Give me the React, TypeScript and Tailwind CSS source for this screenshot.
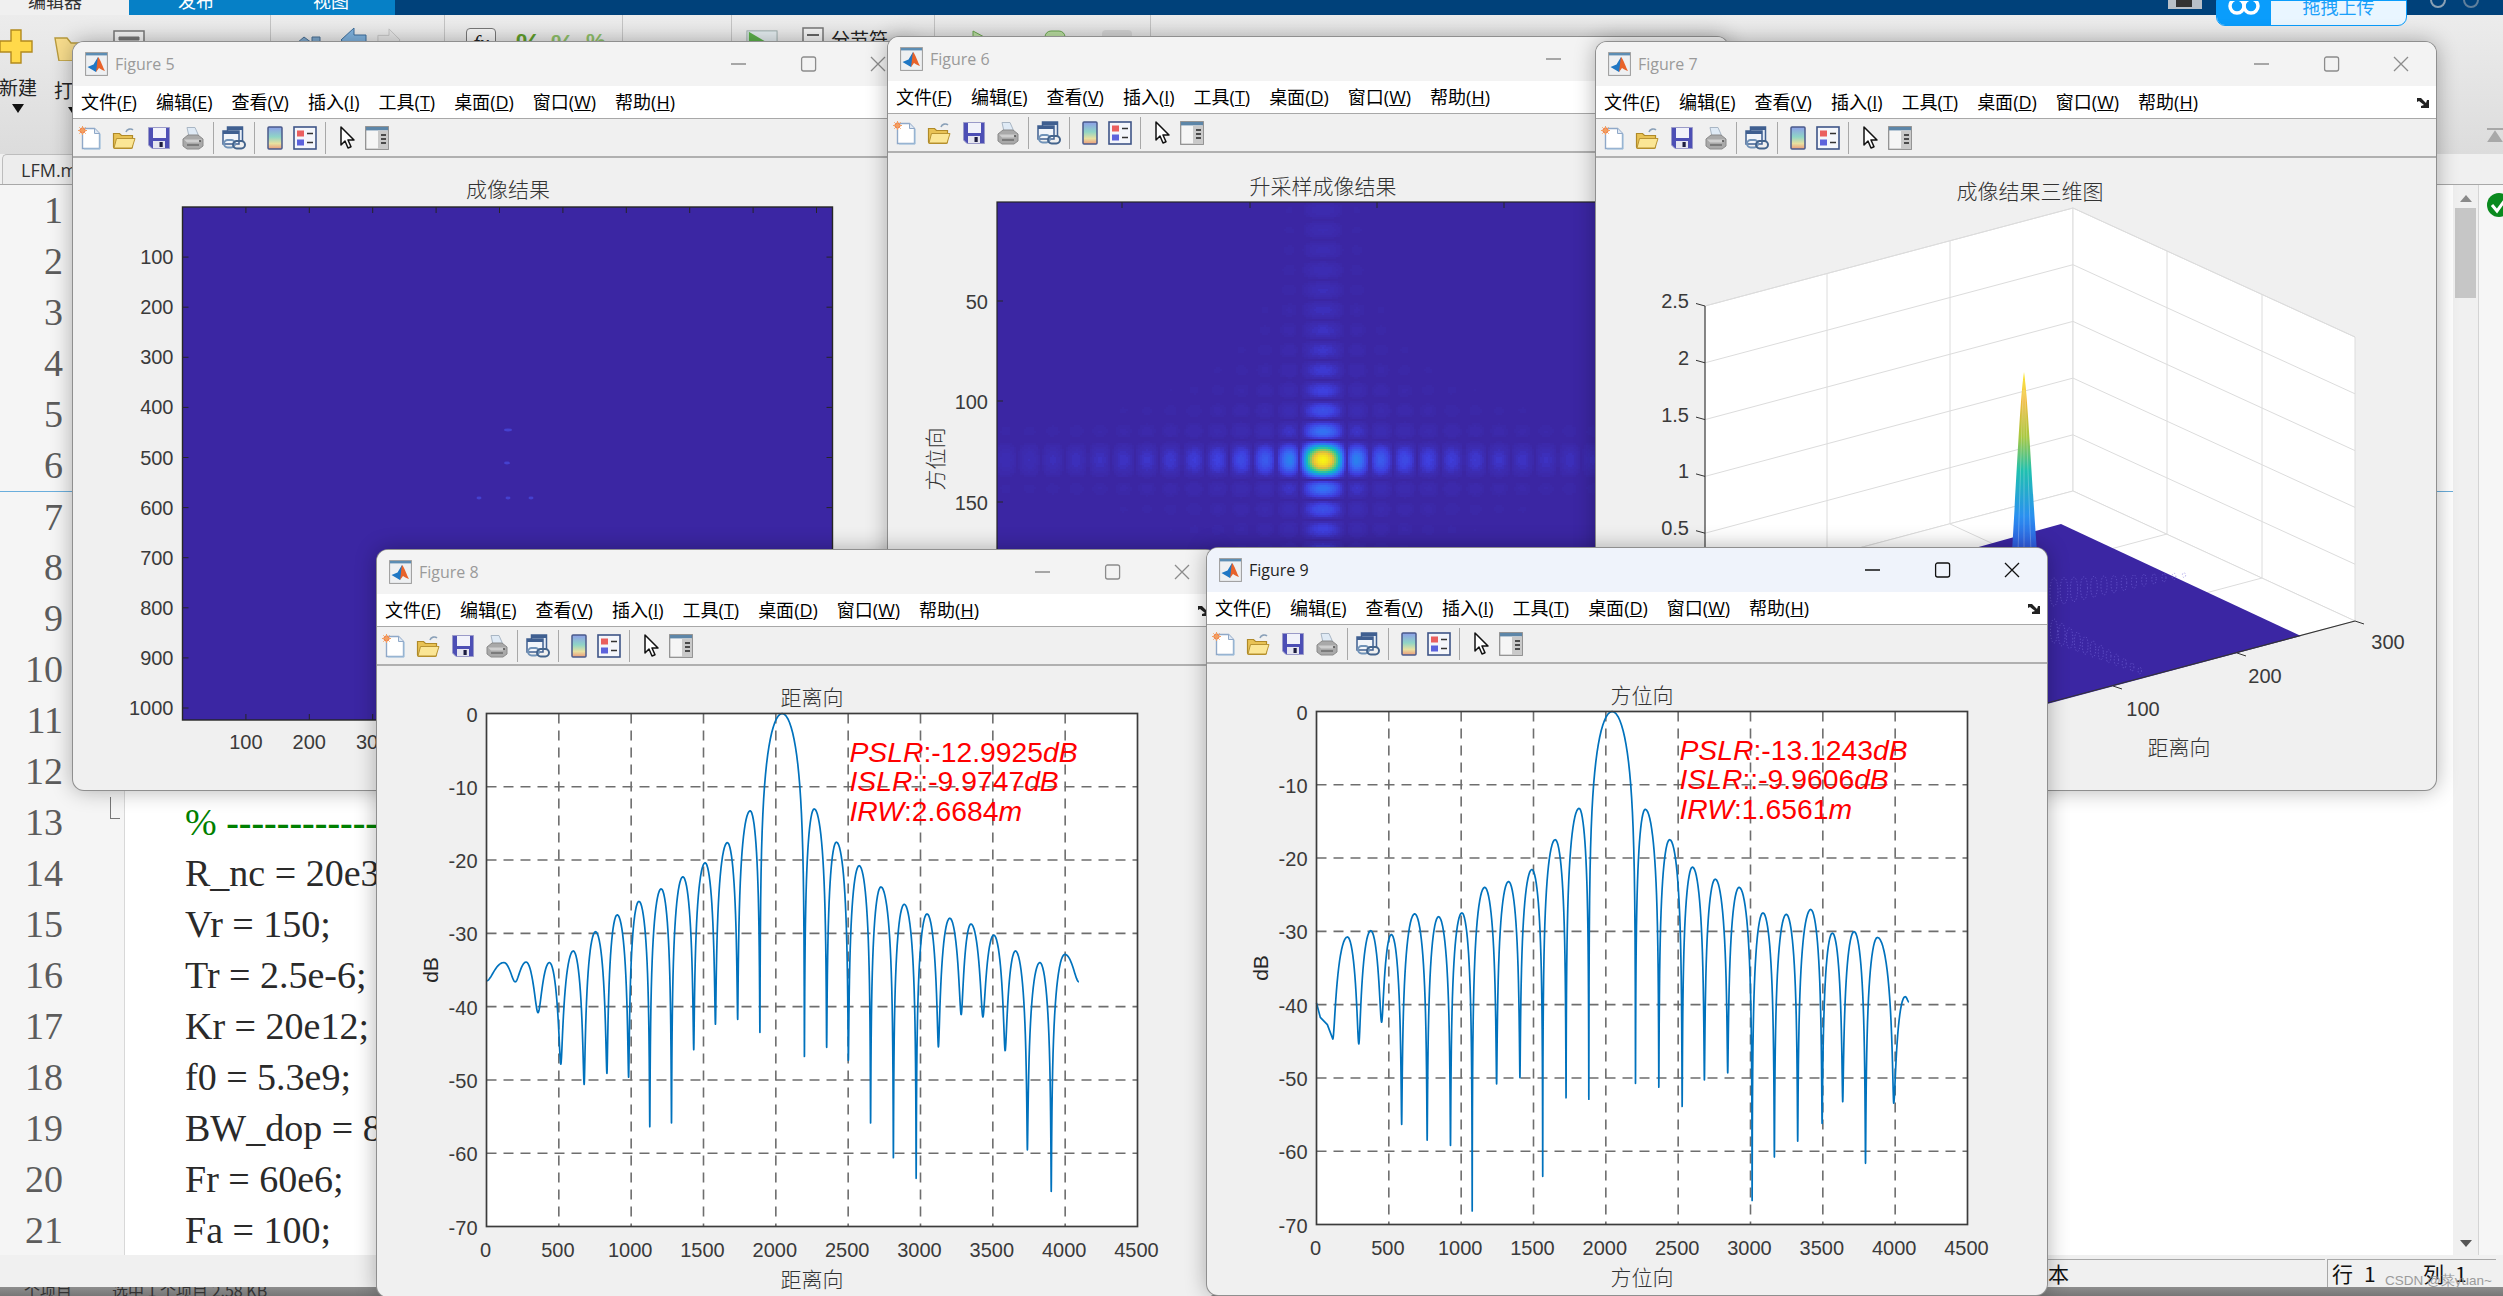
import React from "react";

const SANS = "font-['Liberation_Sans',sans-serif]";

/* ---------- toolbar & window icons ---------- */
const NewIco = () => (
  <svg width="24" height="24" viewBox="0 0 24 24" className="shrink-0">
    <path d="M4.5 2.5h12l5 5v15h-17z" fill="#fff" stroke="#8fa8c8" strokeWidth="1.4" />
    <path d="M16.5 2.5v5h5" fill="#dfe8f3" stroke="#8fa8c8" />
    <path d="M6 23h16V8" fill="none" stroke="#9fc0dc" strokeWidth="1" />
    <circle cx="4.5" cy="4.5" r="3" fill="#f08050" />
    <path d="M4.5 0v9M0 4.5h9M1.3 1.3l6.4 6.4M7.7 1.3L1.3 7.7" stroke="#f3a060" strokeWidth="1" />
  </svg>
);
const OpenIco = () => (
  <svg width="24" height="24" viewBox="0 0 24 24" className="shrink-0">
    <path d="M14 6c1-3 5-4 7-2" fill="none" stroke="#8aa0b8" strokeWidth="1.6" />
    <path d="M1.5 21V7.5h6l2 2h11V21a1.5 1.5 0 0 1-1.5 1.5H3A1.5 1.5 0 0 1 1.5 21z" fill="#e8c254" stroke="#b08a28" strokeWidth="1.2" />
    <path d="M2 22l2.5-9.5H23l-3 9.5z" fill="#fbe695" stroke="#b99432" strokeWidth="1" />
  </svg>
);
const SaveIco = () => (
  <svg width="24" height="24" viewBox="0 0 24 24" className="shrink-0">
    <path d="M1.5 1.5h21v21H5l-3.5-3.5z" fill="#4d4fb5" stroke="#9a9ac8" strokeWidth="1" />
    <rect x="6" y="2" width="13" height="10" fill="#f1f2fa" />
    <rect x="6" y="15" width="12" height="7" fill="#e6e6f0" />
    <rect x="12.5" y="16" width="3.2" height="5" fill="#1d1d40" />
  </svg>
);
const PrintIco = () => (
  <svg width="24" height="24" viewBox="0 0 24 24" className="shrink-0">
    <path d="M6 1.5h8l4 9H8z" fill="#dfeaf5" stroke="#a9b6c4" />
    <path d="M2 13l5-4h10l5 4v7l-4 3H6l-4-3z" fill="#a9a9a9" stroke="#8a8a8a" />
    <path d="M3 13.5h18l-3 3H6z" fill="#cfcfcf" />
    <path d="M6 19h12" stroke="#6d6d6d" strokeWidth="1.4" />
    <circle cx="19" cy="15" r="1.1" fill="#555" />
  </svg>
);
const LinkIco = () => (
  <svg width="24" height="24" viewBox="0 0 24 24" className="shrink-0">
    <rect x="5.5" y="1" width="15" height="14" fill="#e6edf6" stroke="#3f5f90" strokeWidth="1.5" />
    <rect x="5.5" y="1" width="15" height="3" fill="#3f5f90" />
    <rect x="1" y="5" width="16" height="13" fill="#f2f5fa" stroke="#3f5f90" strokeWidth="1.5" />
    <rect x="1" y="5" width="16" height="3" fill="#3f5f90" />
    <rect x="2" y="14" width="11" height="7.5" rx="3.7" fill="none" stroke="#7193b8" strokeWidth="2" />
    <rect x="11" y="15" width="12" height="7.5" rx="3.7" fill="none" stroke="#44648c" strokeWidth="2" />
  </svg>
);
const BarIco = () => (
  <svg width="24" height="24" viewBox="0 0 24 24" className="shrink-0">
    <defs>
      <linearGradient id="cb" x1="0" y1="0" x2="0" y2="1">
        <stop offset="0" stopColor="#8d9ee8" />
        <stop offset="0.45" stopColor="#8fd5c6" />
        <stop offset="0.75" stopColor="#e8e0a0" />
        <stop offset="1" stopColor="#eb9a7a" />
      </linearGradient>
    </defs>
    <rect x="5" y="1" width="14" height="22" rx="1" fill="url(#cb)" stroke="#4a5a8a" strokeWidth="1.5" />
  </svg>
);
const LegIco = () => (
  <svg width="24" height="24" viewBox="0 0 24 24" className="shrink-0">
    <rect x="1" y="1" width="22" height="22" fill="#f4f6fb" stroke="#3f5588" strokeWidth="1.6" />
    <rect x="4" y="4.5" width="7" height="6" fill="#ea5f5f" />
    <rect x="4" y="13.5" width="7" height="6" fill="#5c62dc" />
    <path d="M14 7.5h6M14 16.5h6" stroke="#333" strokeWidth="1.6" />
  </svg>
);
const CurIco = () => (
  <svg width="24" height="24" viewBox="0 0 24 24" className="shrink-0">
    <path d="M6 1v18l4-4 3 7 3-1.3-3-6.7h6z" fill="#fff" stroke="#111" strokeWidth="1.5" strokeLinejoin="round" />
  </svg>
);
const PanIco = () => (
  <svg width="24" height="24" viewBox="0 0 24 24" className="shrink-0">
    <rect x="0.7" y="0.7" width="22.6" height="22.6" fill="#f5f5f5" stroke="#8a8a8a" strokeWidth="1.2" />
    <rect x="1" y="1" width="22" height="3.4" fill="#5d86a8" />
    <rect x="13" y="4.5" width="10" height="18.5" fill="#c9c9c9" />
    <path d="M16 9h5M16 13h5M16 17h5" stroke="#222" strokeWidth="1.7" />
  </svg>
);
const Logo = () => (
  <svg width="23" height="24" viewBox="0 0 23 24" className="shrink-0">
    <rect x="0.6" y="0.6" width="21.8" height="22.8" fill="#eef0f2" stroke="#9a9a9a" />
    <rect x="1" y="1" width="21" height="2.4" fill="#5c8db3" />
    <path d="M2.5 15l6-2.5L13 5l2.5 6-4.5 9z" fill="#1f77c4" />
    <path d="M13 5c3 3 4.500 10 7 14-3-1-4.500-2-6-3-1 1-2 3-3 4 1-5 1-11 2-15z" fill="#e8622a" />
  </svg>
);
const Dock = () => (
  <svg width="14" height="13" viewBox="0 0 14 13" className="shrink-0">
    <path d="M1 2h4l5 5 1-3h2v8H5v-2l3-1-5-4-2 1z" fill="#222" />
  </svg>
);

const Toolbar = () => (
  <div className="flex h-[39px] shrink-0 items-center border-b-2 border-[#b0b0b0] bg-[#f0f0f0] pl-[5px]">
    <NewIco />
    <div className="ml-[10px]"><OpenIco /></div>
    <div className="ml-[11px]"><SaveIco /></div>
    <div className="ml-[10px]"><PrintIco /></div>
    <div className="ml-[8px] h-[32px] w-px bg-[#a8a8a8]" />
    <div className="ml-[8px]"><LinkIco /></div>
    <div className="ml-[8px] h-[32px] w-px bg-[#a8a8a8]" />
    <div className="ml-[8px]"><BarIco /></div>
    <div className="ml-[6px]"><LegIco /></div>
    <div className="ml-[8px] h-[32px] w-px bg-[#a8a8a8]" />
    <div className="ml-[9px]"><CurIco /></div>
    <div className="ml-[6px]"><PanIco /></div>
  </div>
);

const menu: [string, string][] = [
  ["文件", "F"], ["编辑", "E"], ["查看", "V"], ["插入", "I"],
  ["工具", "T"], ["桌面", "D"], ["窗口", "W"], ["帮助", "H"],
];

const Win = ({ cls, title, active, children }: { cls: string; title: string; active?: boolean; children: React.ReactNode }) => (
  <div className={`absolute flex flex-col overflow-hidden rounded-[11px] bg-[#f0f0f0] shadow-[0_0_0_1px_#8f8f8f,0_0_22px_rgba(0,0,0,0.32)] ${cls}`}>
    <div className={`flex h-[44px] shrink-0 items-center pl-[12px] pr-[27px] ${active ? "bg-[#eff3fb]" : "bg-[#f3f3f3]"}`}>
      <Logo />
      <span className={`ml-[7px] flex-1 font-['Open_Sans',sans-serif] text-[16px] ${active ? "text-[#1f1f1f]" : "text-[#9a9a9a]"}`}>{title}</span>
      <svg width="155" height="16" viewBox="0 0 155 16" stroke={active ? "#111" : "#8c8c8c"} strokeWidth="1.3" fill="none">
        <path d="M0 8h15" />
        <rect x="70.600" y="1" width="14" height="14" rx="2" />
        <path d="M140 1l14 14M154 1l-14 14" />
      </svg>
    </div>
    <div className="flex h-[33px] shrink-0 items-center justify-between border-b border-[#a8a8a8] bg-white pl-[8px] pr-[6px] font-['Open_Sans','Noto_Sans_CJK_SC',sans-serif] text-[18px] text-black">
      <div className="flex gap-[19px]">
        {menu.map(([a, b]) => (
          <span key={a} className="whitespace-nowrap">{a}(<u>{b}</u>)</span>
        ))}
      </div>
      <Dock />
    </div>
    <Toolbar />
    <div className="flex-1 overflow-hidden">{children}</div>
  </div>
);

/* ---------- charts ---------- */
const TXT = "#3a3a3a";
const cjk = "font-['Noto_Sans_CJK_SC',sans-serif] font-light";

function lobes(pts: number[][], top: number, axL: number, axT: number, prefix: number[][] = []) {
  const X = (x: number) => axL + ((x - 215) / 1200) * 651;
  const Y = (y: number) => axT + ((y - top) / 1065) * 513;
  const out: string[] = prefix.map((p) => `${X(p[0]).toFixed(2)},${Y(p[1]).toFixed(2)}`);
  const half = (n: number[], p: number[], rev: boolean) => {
    const d = (n[1] - p[1]) / 15.2;
    const e2 = Math.pow(10, -d / 10);
    const den = Math.log(1 + e2) - Math.log(e2);
    const N = 22;
    for (let k = 0; k <= N; k++) {
      const i = rev ? N - k : k;
      const u = (i / N) * (i / N);
      const s = Math.sin((Math.PI / 2) * u);
      const g = (Math.log(1 + e2) - Math.log(s * s + e2)) / den;
      out.push(`${X(n[0] + (p[0] - n[0]) * u).toFixed(2)},${Y(p[1] + (n[1] - p[1]) * g).toFixed(2)}`);
    }
  };
  for (let i = 0; i + 2 < pts.length; i += 2) {
    half(pts[i], pts[i + 1], false);
    half(pts[i + 2], pts[i + 1], true);
  }
  return "M" + out.join("L");
}

const f8pts = [
  [215,915],[247,877],[268,917],[288,876],[310,981],[331,877],[352,1088],[375,853],[395,1130],[416,813],[437,1107],[456,778],[477,1115],[496,750],[516,1218],[537,724],[556,1210],[577,699],[597,1058],[618,670],[637,1005],[659,628],[678,995],[701,562],[719,1022],[760,360],[801,1072],[819,558],[842,1053],[860,627],[882,1080],[902,676],[923,1210],[942,720],[965,1282],[985,756],[1007,1325],[1027,776],[1048,1052],[1069,785],[1090,985],[1108,797],[1130,990],[1150,820],[1171,1060],[1190,853],[1212,1266],[1235,877],[1256,1352],[1281,860],[1307,917],
];
const f9pts = [
  [245,1035],[272,823],[293,1045],[315,810],[335,1000],[353,818],[372,1212],[396,775],[419,1245],[440,781],[462,1256],[483,773],[502,1392],[525,720],[547,1128],[569,708],[590,1115],[612,683],[632,1320],[655,621],[675,1157],[699,556],[717,1160],[760,355],[803,1127],[821,558],[846,1135],[866,621],[889,1175],[908,678],[930,1120],[950,703],[973,1105],[994,720],[1018,1370],[1038,773],[1059,1280],[1081,776],[1102,1247],[1126,766],[1147,1210],[1166,815],[1185,1165],[1206,812],[1227,1293],[1249,824],[1279,1168],[1300,947],[1307,958],
];

const LinePlot = ({ axL, axT, vx, vy, vw, vh, title, d, lines }: { axL: number; axT: number; vx: number; vy: number; vw: number; vh: number; title: string; d: string; lines: React.ReactNode[] }) => {
  const W = 651, H = 513;
  const xs = Array.from({ length: 10 }, (_, i) => i);
  const ys = Array.from({ length: 8 }, (_, i) => i);
  return (
    <svg width={vw} height={vh} viewBox={`${vx} ${vy} ${vw} ${vh}`} className={`block ${SANS}`}>
      <rect x={axL} y={axT} width={W} height={H} fill="#fff" />
      {xs.slice(1, 9).map((i) => (
        <line key={i} x1={axL + (i * W) / 9} x2={axL + (i * W) / 9} y1={axT} y2={axT + H} stroke="#6e6e6e" strokeWidth="1.6" strokeDasharray="10 7" />
      ))}
      {ys.slice(1, 7).map((i) => (
        <line key={i} y1={axT + (i * H) / 7} y2={axT + (i * H) / 7} x1={axL} x2={axL + W} stroke="#6e6e6e" strokeWidth="1.6" strokeDasharray="10 7" />
      ))}
      <path d={d} fill="none" stroke="#0072bd" strokeWidth="1.7" strokeLinejoin="round" />
      <rect x={axL} y={axT} width={W} height={H} fill="none" stroke="#3c3c3c" strokeWidth="1.700" />
      {xs.map((i) => (
        <text key={i} x={axL + (i * W) / 9 - 1} y={axT + H + 30} textAnchor="middle" fontSize="20" fill={TXT}>{i * 500}</text>
      ))}
      {ys.map((i) => (
        <text key={i} x={axL - 9} y={axT + (i * H) / 7 + 8} textAnchor="end" fontSize="20" fill={TXT}>{i === 0 ? "0" : `-${i * 10}`}</text>
      ))}
      <text x={axL + W / 2} y={axT - 9} textAnchor="middle" fontSize="21" fill="#333" className={cjk}>{title}</text>
      <text x={axL + W / 2} y={axT + H + 60} textAnchor="middle" fontSize="21" fill="#333" className={cjk}>{title}</text>
      <text transform={`rotate(-90 ${axL - 49} ${axT + H / 2})`} x={axL - 49} y={axT + H / 2} textAnchor="middle" fontSize="21" fill="#262626">dB</text>
      {lines.map((l, i) => (
        <text key={i} x={axL + 363} y={axT + 48 + i * 29.500} fontSize="28.300" fill="#ff0000">{l}</text>
      ))}
    </svg>
  );
};

const it = (s: string) => <tspan fontStyle="italic">{s}</tspan>;

const Plot5 = () => {
  const L = 182.5, T = 207, W = 650, H = 513;
  const tx = Array.from({ length: 10 }, (_, i) => (i + 1) * 100);
  return (
    <svg width={840} height={632} viewBox="73 158 840 632" className={`block ${SANS}`}>
      <rect x={L} y={T} width={W} height={H} fill="#3b26a3" stroke="#262626" strokeWidth="1.4" />
      {[[508, 430, 4], [507, 463, 3], [479, 498, 2.500], [508, 498, 2.500], [531, 498, 2.500]].map(([x, y, r], i) => (
        <ellipse key={i} cx={x} cy={y} rx={r} ry="1.400" fill="#4541cf" />
      ))}
      {tx.map((v) => {
        const x = L + v * 0.634, y = T + v * 0.501;
        return (
          <g key={v}>
            <path d={`M${x} ${T}v6M${x} ${T + H}v-6M${L} ${y}h6M${L + W} ${y}h-6`} stroke="#262626" strokeWidth="1" />
            <text x={L - 9} y={y + 7} textAnchor="end" fontSize="20" fill={TXT}>{v}</text>
            <text x={x} y={T + H + 29} textAnchor="middle" fontSize="20" fill={TXT}>{v}</text>
          </g>
        );
      })}
      <text x={508} y={197} textAnchor="middle" fontSize="21" fill="#333" className={cjk}>成像结果</text>
    </svg>
  );
};

/* parula-like colour for the upsampled image */
const stops: [number, number[]][] = [
  [0, [59, 38, 163]], [0.05, [60, 44, 178]], [0.12, [62, 62, 222]], [0.24, [56, 104, 244]], [0.36, [30, 150, 232]],
  [0.5, [16, 191, 185]], [0.65, [111, 204, 107]], [0.8, [232, 188, 58]], [1, [248, 243, 21]],
];
const colour = (v: number) => {
  for (let i = 1; i < stops.length; i++) {
    if (v <= stops[i][0]) {
      const [a, ca] = stops[i - 1];
      const [b, cb] = stops[i];
      const t = (v - a) / (b - a);
      return `rgb(${ca.map((c, k) => Math.round(c + (cb[k] - c) * t)).join(",")})`;
    }
  }
  return "rgb(248,243,21)";
};
const sinc = (x: number) => (Math.abs(x) < 1e-6 ? 1 : Math.sin(Math.PI * x) / (Math.PI * x));
const heat = (() => {
  const cx = 1323, cy = 460, c = 2, LV = 80;
  const buckets: string[] = Array.from({ length: LV + 1 }, () => "");
  for (let y = 203; y < 552; y += c) {
    for (let x = 998; x < 1598; x += c) {
      const sx = Math.abs(sinc((x + 1 - cx) / 23.5));
      const sy = Math.abs(sinc((y + 1 - cy) / 20));
      const v = Math.pow(sx, 0.78) * Math.pow(sy, 0.86);
      if (v < 0.012) continue;
      const q = Math.round(v * LV);
      if (q === 0) continue;
      buckets[q] += `M${x} ${y}h${c}v${c}h-${c}z`;
    }
  }
  return buckets.map((d, i) => ({ d, col: colour(i / LV) })).filter((b) => b.d);
})();

const Plot6 = () => (
  <svg width={840} height={637} viewBox="888 153 840 637" className={`block ${SANS}`}>
    <rect x={997} y={202} width={650} height={513} fill="#3b26a3" stroke="#262626" strokeWidth="1.2" />
    {heat.map((b, i) => <path key={i} d={b.d} fill={b.col} />)}
    {[1122, 1250, 1377, 1504].map((x) => <path key={x} d={`M${x} 202v6`} stroke="#262626" />)}
    {[[301, "50"], [401, "100"], [502, "150"]].map(([y, t]) => (
      <g key={t as string}>
        <path d={`M997 ${y}h6`} stroke="#262626" />
        <text x={988} y={(y as number) + 8} textAnchor="end" fontSize="20" fill={TXT}>{t}</text>
      </g>
    ))}
    <text x={1323} y={194} textAnchor="middle" fontSize="21" fill="#333" className={cjk}>升采样成像结果</text>
    <text transform="rotate(-90 943 459)" x={943} y={459} textAnchor="middle" fontSize="21" fill="#333" className={cjk}>方位向</text>
  </svg>
);

const Plot7 = () => (
  <svg width={840} height={632} viewBox="1596 158 840 632" className={`block ${SANS}`}>
    <defs>
      <linearGradient id="spk" x1="0" y1="0" x2="0" y2="1">
        <stop offset="0" stopColor="#f9e71e" />
        <stop offset="0.16" stopColor="#f0b93a" />
        <stop offset="0.36" stopColor="#a8c840" />
        <stop offset="0.55" stopColor="#1fc0b0" />
        <stop offset="0.8" stopColor="#2a90f0" />
        <stop offset="1" stopColor="#3355e0" />
      </linearGradient>
    </defs>
    <polygon points="1705,306 2073,208 2073,491 1705,589" fill="#fff" stroke="#dcdcdc" />
    <polygon points="2073,208 2355,337 2355,621 2073,491" fill="#fff" stroke="#dcdcdc" />
    <polygon points="2073,491 2355,621 1987,719 1705,589" fill="#fff" stroke="#dcdcdc" />
    <g stroke="#dcdcdc" strokeWidth="1">
      {[0, 1, 2, 3, 4].map((k) => (
        <g key={k}>
          <line x1={1705} y1={306 + 56.8 * k} x2={2073} y2={208 + 56.7 * k} />
          <line x1={2073} y1={208 + 56.7 * k} x2={2355} y2={337 + 56.8 * k} />
        </g>
      ))}
      <path d="M1827 273V556L2109 686M1950 241V524L2232 654M2167 251V534L1799 632M2262 294V578L1894 676" fill="none" />
    </g>
    <polygon points="1900,569 2061,524 2301,636 2047,704 1900,650" fill="#3b26a3" />
    <g fill="none" stroke="#7d72e0" strokeWidth="0.7" strokeDasharray="1.200 1.800" strokeOpacity="0.8">
      {Array.from({ length: 14 }, (_, i) => (
        <ellipse key={i} cx={2054 + i * 10} cy={592 - i * 1.3} rx={4 - i * 0.18} ry={14 - i * 0.9} />
      ))}
      {Array.from({ length: 12 }, (_, i) => (
        <ellipse key={i} cx={2054 + i * 7.800} cy={631 + i * 3.6} rx={3.500 - i * 0.16} ry={12 - i * 0.8} />
      ))}
    </g>
    <path d="M2012 552C2017 470 2020 400 2024 372C2028 400 2031 470 2037 552Z" fill="url(#spk)" />
    <path d="M2018 552L2023 390M2024 552V380M2031 552L2025 390" stroke="#ffffff" strokeOpacity="0.25" fill="none" />
    <path d="M1705 306V589M1987 719L2355 621" stroke="#333" strokeWidth="1.1" fill="none" />
    {[0, 1, 2, 3, 4].map((k) => (
      <g key={k}>
        <path d={`M1696 ${303.5 + 56.8 * k}L1705 ${306 + 56.8 * k}`} stroke="#333" />
        <text x={1689} y={308 + 56.8 * k} textAnchor="end" fontSize="20" fill={TXT}>{["2.5", "2", "1.5", "1", "0.5"][k]}</text>
      </g>
    ))}
    {[[2355, 621], [2237, 653], [2113, 686]].map(([x, y]) => (
      <path key={x} d={`M${x} ${y}l9 3`} stroke="#333" />
    ))}
    <text x={2388} y={649} textAnchor="middle" fontSize="20" fill={TXT}>300</text>
    <text x={2265} y={683} textAnchor="middle" fontSize="20" fill={TXT}>200</text>
    <text x={2143} y={716} textAnchor="middle" fontSize="20" fill={TXT}>100</text>
    <text x={2179} y={755} textAnchor="middle" fontSize="21" fill="#333" className={cjk}>距离向</text>
    <text x={2030} y={199} textAnchor="middle" fontSize="21" fill="#333" className={cjk}>成像结果三维图</text>
  </svg>
);

/* ---------- editor behind the figures ---------- */
const code: Record<number, React.ReactNode> = {
  13: <span className="font-bold text-[#008000]"><span className="font-normal">%</span> ------------------------------------</span>,
  14: "R_nc = 20e3;",
  15: "Vr = 150;",
  16: "Tr = 2.5e-6;",
  17: "Kr = 20e12;",
  18: "f0 = 5.3e9;",
  19: "BW_dop = 80;",
  20: "Fr = 60e6;",
  21: "Fa = 100;",
};

const Sep = ({ cls }: { cls: string }) => <div className={`h-[70px] w-px shrink-0 bg-[#c4c4c4] ${cls}`} />;

const Ribbon = () => (
  <div className="flex h-[139px] shrink-0 bg-gradient-to-b from-[#ececec] to-[#dcdcdc] font-['Noto_Sans_CJK_SC',sans-serif] text-[#222]">
    <div className="flex w-[50px] shrink-0 flex-col items-center pt-[14px]">
      <svg width="34" height="35" viewBox="0 0 34 35" className="-ml-[18px]">
        <path d="M12 1h10v11h11v11H22v11H12V23H1V12h11z" fill="#ffd94a" stroke="#b38a1e" strokeWidth="1.400" />
      </svg>
      <span className="-ml-[14px] mt-[12px] text-[19px] leading-[22px]">新建</span>
      <span className="-ml-[14px] mt-[6px] h-0 w-0 border-x-[6px] border-t-[9px] border-x-transparent border-t-[#111]" />
    </div>
    <div className="flex w-[40px] shrink-0 flex-col pl-[4px] pt-[22px]">
      <svg width="34" height="24" viewBox="0 0 34 24"><path d="M1 1h12l4 5h15v18H5z" fill="#f7dc8c" stroke="#b89a3c" strokeWidth="1.400" /></svg>
      <span className="mt-[18px] text-[19px] leading-[22px]">打</span>
      <span className="ml-[14px] mt-[6px] h-0 w-0 border-x-[6px] border-t-[9px] border-x-transparent border-t-[#111]" />
    </div>
    <svg width="32" height="34" viewBox="0 0 32 34" className="ml-[23px] mt-[15px] shrink-0"><rect x="1" y="1" width="30" height="32" fill="#f4f4f4" stroke="#777" strokeWidth="1.500" /><path d="M6 7h20v3H6zM6 13h14" stroke="#777" fill="#777" /></svg>
    <Sep cls="ml-[125px]" />
    <svg width="32" height="14" viewBox="0 0 32 14" className="ml-[19px] mt-[20px] shrink-0"><path d="M0 14L14 2l8 6V2h8v12z" fill="#7fa8cc" stroke="#4a6e92" /></svg>
    <svg width="26" height="26" viewBox="0 0 26 26" className="ml-[19px] mt-[12px] shrink-0"><path d="M0 13L13 1v7h12v10H13v7z" fill="#7fb2de" stroke="#3e6f9c" /></svg>
    <svg width="24" height="26" viewBox="0 0 26 26" className="ml-[10px] mt-[12px] shrink-0"><path d="M25 13L13 1v7H1v10h12v7z" fill="#e6e6e6" stroke="#c2c2c2" /></svg>
    <Sep cls="ml-[43px]" />
    <div className="ml-[21px] mt-[13px] h-[40px] w-[30px] shrink-0 rounded-[4px] border border-[#777] bg-[#f4f4f4] text-center font-['Liberation_Serif',serif] text-[22px] italic leading-[28px]">fx</div>
    <span className="ml-[20px] mt-[11px] w-[25px] shrink-0 font-['Liberation_Sans',sans-serif] text-[28px] font-bold leading-[36px] text-[#5f9e2c]">%</span>
    <span className="ml-[10px] mt-[11px] w-[23px] shrink-0 font-['Liberation_Sans',sans-serif] text-[26px] font-bold leading-[36px] text-[#8fc06a]">%</span>
    <span className="ml-[12px] mt-[11px] w-[20px] shrink-0 font-['Liberation_Sans',sans-serif] text-[22px] font-bold leading-[32px] text-[#8fc06a]">%</span>
    <Sep cls="ml-[16px]" />
    <Sep cls="ml-[108px]" />
    <svg width="32" height="32" viewBox="0 0 34 32" className="ml-[14px] mt-[14px] shrink-0"><rect x="1" y="1" width="32" height="30" fill="#e4ecef" stroke="#9aa" /><path d="M3 2l22 13L3 28z" fill="#5bb04a" /></svg>
    <svg width="22" height="34" viewBox="0 0 22 34" className="ml-[24px] mt-[12px] shrink-0"><rect x="1" y="1" width="20" height="32" fill="#f4f4f4" stroke="#777" strokeWidth="1.500" /><path d="M5 8h12M5 24h12" stroke="#666" strokeWidth="2" /></svg>
    <span className="ml-[7px] mt-[9px] w-[57px] shrink-0 whitespace-nowrap text-[19px] leading-[30px]">分节符</span>
    <Sep cls="ml-[46px]" />
    <svg width="32" height="30" viewBox="0 0 32 30" className="ml-[36px] mt-[15px] shrink-0"><path d="M2 1l26 14L2 29z" fill="#bfe3a6" stroke="#6aa84f" /></svg>
    <svg width="22" height="30" viewBox="0 0 22 30" className="ml-[41px] mt-[15px] shrink-0"><rect x="1" y="1" width="20" height="28" rx="6" fill="#bfe3a6" stroke="#6aa84f" /></svg>
    <div className="ml-[36px] mt-[15px] h-[30px] w-[30px] shrink-0 rounded-[4px] bg-[#d8d8d8]" />
    <Sep cls="ml-[18px]" />
    <svg width="16" height="14" viewBox="0 0 16 14" className="ml-auto mt-[113px] shrink-0"><path d="M0 1h16M2 13l6-9 6 9z" fill="#a8a8a8" stroke="#a8a8a8" strokeWidth="2" /></svg>
  </div>
);

export default function App() {
  return (
    <div className="relative flex h-[1296px] w-[2503px] flex-col overflow-hidden bg-[#f0f0f0]">
      {/* top tab strip */}
      <div className="flex h-[15px] shrink-0 overflow-hidden bg-[#00417a] font-['Noto_Sans_CJK_SC',sans-serif] text-[18px] leading-[18px]">
        <div className="-mt-[9px] w-[129px] bg-[#f0f0f0] pl-[28px] text-[#333]">编辑器</div>
        <div className="-mt-[9px] w-[133px] bg-[#0680c6] pl-[49px] text-white">发布</div>
        <div className="-mt-[9px] w-[133px] bg-[#0680c6] pl-[51px] text-white">视图</div>
        <div className="ml-[1773px] -mt-px h-[10px] w-[34px] bg-[#b8c0c8] pl-[8px]"><div className="h-[8px] w-[16px] bg-[#333]" /></div>
        <div className="ml-[228px] flex gap-[17px]">
          <div className="-mt-[8px] h-[16px] w-[16px] rounded-full border-2 border-[#8aa0b4]" />
          <div className="-mt-[8px] h-[16px] w-[16px] rounded-full border-2 border-[#5f7f9c]" />
        </div>
      </div>

      <Ribbon />

      {/* file tabs */}
      <div className="flex h-[31px] shrink-0 border-b border-[#a8a8a8] bg-[#f0f0f0] pl-[2px]">
        <div className="w-[120px] rounded-t-[5px] border-l border-t border-[#bdbdbd] bg-[#ededed] pl-[18px] font-['Open_Sans',sans-serif] text-[18px] leading-[30px] text-[#333]">LFM.m</div>
      </div>

      {/* editor */}
      <div className="flex min-h-0 flex-1">
        <div className="min-w-0 flex-1 overflow-hidden bg-white font-['Liberation_Serif',serif] text-[38px] leading-[51px]">
          {Array.from({ length: 21 }, (_, i) => i + 1).map((n) => (
            <div key={n} className={`box-border flex h-[51px] ${n === 7 ? "border-t border-[#6aaedc]" : ""}`}>
              <div className="relative w-[125px] shrink-0 border-r border-[#d8d8d8] bg-[#f5f5f5]">
                <span className="block w-[63px] text-right text-[#5c5c5c]">{n}</span>
                {n === 13 && <span className="absolute left-[110px] top-0 h-[22px] w-[10px] border-b border-l border-[#777]" />}
              </div>
              <div className="whitespace-nowrap pl-[60px] text-[#2a2a2a]">{code[n]}</div>
            </div>
          ))}
        </div>
        <div className="flex w-[25px] shrink-0 flex-col items-center justify-between bg-[#f0f0f0] pb-[8px] pt-[10px]">
          <div className="flex flex-col items-center">
            <span className="h-0 w-0 border-x-[6px] border-b-[7px] border-x-transparent border-b-[#8a8a8a]" />
            <div className="mt-[6px] h-[90px] w-[21px] bg-[#c6c6c6]" />
          </div>
          <span className="h-0 w-0 border-x-[6px] border-t-[7px] border-x-transparent border-t-[#555]" />
        </div>
        <div className="w-[25px] shrink-0 border-l border-[#d4d4d4] bg-[#f6f6f6] pl-[8px] pt-[8px]">
          <svg width="24" height="24" viewBox="0 0 24 24"><circle cx="12" cy="12" r="12" fill="#0a8a1e" /><path d="M5 12l5 6 8-11" fill="none" stroke="#fff" strokeWidth="3" /></svg>
        </div>
      </div>

      {/* status bar */}
      <div className="flex h-[32px] shrink-0 items-end justify-end bg-[#f0f0f0] pr-[7px] font-['Noto_Sans_CJK_SC',sans-serif] text-[21px] leading-[26px] text-[#111]">
        <div className="h-[28px] w-[281px] border-t border-[#a8a8a8]"><span className="-ml-[17px]">脚本</span></div>
        <div className="ml-[2px] flex h-[28px] w-[169px] border-l border-t border-[#a8a8a8] pl-[4px]">
          <span className="w-[32px]">行</span><span className="w-[59px]">1</span>
          <span className="w-[32px]">列</span><span>1</span>
        </div>
      </div>
      <div className="flex h-[9px] shrink-0 gap-[40px] overflow-hidden bg-gradient-to-b from-[#8d8d8d] to-[#777] pl-[24px] font-['Noto_Sans_CJK_SC',sans-serif] text-[16px] leading-[6px] text-[#333]">
        <span>个项目</span><span>选中 1 个项目 2.58 KB</span>
      </div>

      {/* floating upload widget */}
      <div className="absolute left-[2216px] top-0 flex h-[26px] w-[191px] overflow-hidden rounded-b-[9px] border border-[#0a9dfc] bg-[#e9f6ff]">
        <div className="flex w-[54px] items-start justify-center bg-[#0a9dfc]">
          <svg width="34" height="18" viewBox="0 0 34 18" fill="none" stroke="#fff" strokeWidth="3.500" className="-mt-[4px]"><circle cx="10" cy="9" r="7" /><circle cx="24" cy="9" r="7" /></svg>
        </div>
        <span className="-mt-[8px] flex-1 text-center font-['Noto_Sans_CJK_SC',sans-serif] text-[18px] leading-[26px] text-[#1aa0fa]">拖拽上传</span>
      </div>

      {/* figure windows */}
      <Win cls="left-[73px] top-[42px] h-[748px] w-[840px]" title="Figure 5"><Plot5 /></Win>
      <Win cls="left-[888px] top-[37px] h-[753px] w-[840px]" title="Figure 6"><Plot6 /></Win>
      <Win cls="left-[1596px] top-[42px] h-[748px] w-[840px]" title="Figure 7"><Plot7 /></Win>
      <Win cls="left-[377px] top-[550px] h-[747px] w-[840px]" title="Figure 8">
        <LinePlot
          axL={486.5} axT={713.5} vx={377} vy={666} vw={840} vh={631}
          title="距离向"
          d={lobes(f8pts, 360, 486.5, 713.5)}
          lines={[
            <React.Fragment key="a">{it("PSLR")}:-12.9925{it("dB")}</React.Fragment>,
            <React.Fragment key="b">{it("ISLR")}::-9.9747{it("dB")}</React.Fragment>,
            <React.Fragment key="c">{it("IRW")}:2.6684{it("m")}</React.Fragment>,
          ]}
        />
      </Win>
      <Win cls="left-[1207px] top-[548px] h-[747px] w-[840px]" title="Figure 9" active>
        <LinePlot
          axL={1316.5} axT={711.5} vx={1207} vy={664} vw={840} vh={631}
          title="方位向"
          d={lobes(f9pts, 355, 1316.5, 711.5, [[215, 960], [222, 990], [235, 1005]])}
          lines={[
            <React.Fragment key="a">{it("PSLR")}:-13.1243{it("dB")}</React.Fragment>,
            <React.Fragment key="b">{it("ISLR")}::-9.9606{it("dB")}</React.Fragment>,
            <React.Fragment key="c">{it("IRW")}:1.6561{it("m")}</React.Fragment>,
          ]}
        />
      </Win>

      <span className={`absolute left-[2385px] top-[1271px] text-[13.500px] text-[#9a9a9a] ${SANS}`}>CSDN @菜yuan~</span>
    </div>
  );
}
